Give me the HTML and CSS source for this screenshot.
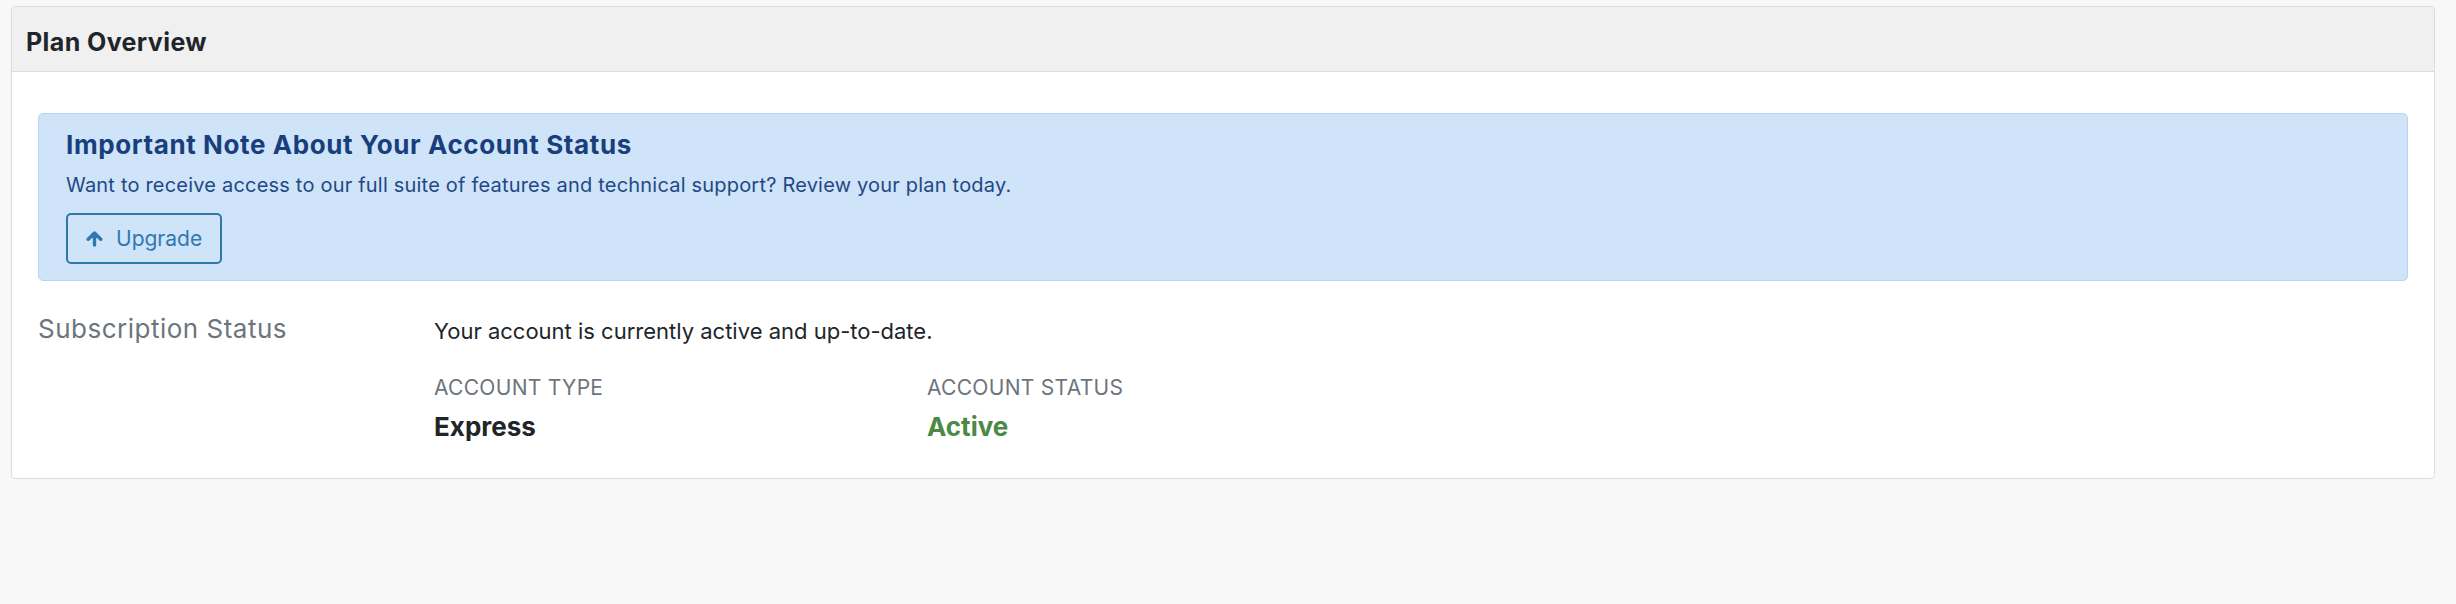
FILE: index.html
```html
<!DOCTYPE html>
<html lang="en">
<head>
    <meta charset="UTF-8">
    <meta name="viewport" content="width=device-width, initial-scale=1.0">
    <title>Plan Overview</title>
    <link rel="stylesheet" href="styles.css">
</head>
<body>
    <div class="card">
        <div class="card-header">
            <h2 class="card-title">Plan Overview</h2>
        </div>
        <div class="card-body">
            <div class="alert">
                <h3 class="alert-heading">Important Note About Your Account Status</h3>
                <p class="alert-text">Want to receive access to our full suite of features and technical support? Review your plan today.</p>
                <button class="btn-upgrade" type="button">
                    <svg class="icon-up" viewBox="0 0 17 16" width="17" height="16" aria-hidden="true">
                        <path d="M8.5 2 L2.2 8.3 M8.5 2 L14.8 8.3 M8.5 2.5 V14" fill="none" stroke="currentColor" stroke-width="3.4" stroke-linecap="round" stroke-linejoin="round"/>
                    </svg>
                    Upgrade
                </button>
            </div>

            <div class="status-row">
                <div class="status-label">Subscription Status</div>
                <div class="status-content">
                    <p class="status-text">Your account is currently active and up-to-date.</p>
                    <div class="status-details">
                        <div class="detail">
                            <div class="detail-label">Account Type</div>
                            <div class="detail-value">Express</div>
                        </div>
                        <div class="detail">
                            <div class="detail-label">Account Status</div>
                            <div class="detail-value active">Active</div>
                        </div>
                    </div>
                </div>
            </div>
        </div>
    </div>
</body>
</html>
```

FILE: styles.css
```css
body {
    margin: 0;
    padding: 6px 21px 0 11px;
    height: 604px;
    box-sizing: border-box;
    background-color: #f8f8f8;
    font-family: Inter, "Noto Sans", sans-serif;
    color: #212529;
}

.card {
    background-color: #fff;
    border: 1px solid #dcdcdc;
    border-radius: 4px;
    overflow: hidden;
}

.card-header {
    background-color: #f0f0f0;
    border-bottom: 1px solid #dcdcdc;
    height: 44px;
    padding: 20px 14px 0 14px;
}

.card-title {
    margin: 0;
    font-size: 25px;
    font-weight: 700;
    line-height: 30px;
    letter-spacing: 0.4px;
}

.card-body {
    padding: 41px 26px 36px 26px;
}

.alert {
    background-color: #cfe3f9;
    border: 1px solid #b7d4f5;
    border-radius: 5px;
    padding: 16px 27px 16px 27px;
}

.alert-heading {
    margin: 0;
    font-size: 26px;
    font-weight: 700;
    line-height: 30px;
    letter-spacing: 0.6px;
    color: #183f7b;
}

.alert-text {
    margin: 10px 0 0 0;
    font-size: 20px;
    line-height: 30px;
    letter-spacing: 0.2px;
    color: #1f4984;
}

.btn-upgrade {
    margin-top: 13px;
    display: inline-flex;
    align-items: center;
    gap: 13px;
    height: 51px;
    padding: 0 18px;
    border: 2px solid #2f78ab;
    border-radius: 5px;
    background: transparent;
    color: #2f79b0;
    font-family: Inter, "Noto Sans", sans-serif;
    font-size: 21px;
    line-height: 27px;
}

.icon-up {
    display: block;
}

.status-row {
    display: grid;
    grid-template-columns: 396px 1fr;
    margin-top: 33px;
}

.status-label {
    font-size: 26px;
    line-height: 30px;
    letter-spacing: 0.5px;
    color: #6c757d;
}

.status-text {
    margin: 2px 0 0 0;
    font-size: 22px;
    line-height: 30px;
}

.status-details {
    display: grid;
    grid-template-columns: 493px 493px;
    margin-top: 29px;
}

.detail-label {
    font-size: 21px;
    line-height: 26px;
    letter-spacing: 0.3px;
    text-transform: uppercase;
    color: #6c757d;
}

.detail-value {
    margin-top: 11px;
    font-size: 26px;
    font-weight: 700;
    line-height: 30px;
}

.detail-value.active {
    color: #4b8a45;
}
```
